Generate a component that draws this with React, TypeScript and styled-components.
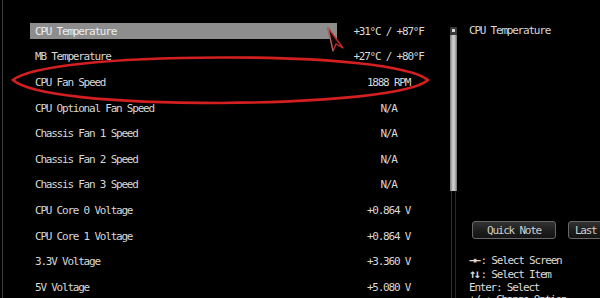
import React from 'react';
import styled, { createGlobalStyle } from 'styled-components';

const GlobalStyle = createGlobalStyle`
  html, body {
    margin: 0;
    padding: 0;
    background: #000;
    overflow: hidden;
  }
`;

const Screen = styled.div`
  position: relative;
  width: 600px;
  height: 298px;
  overflow: hidden;
  background: #000;
  padding-left: 2px;
  box-sizing: border-box;
  display: flex;
  font-family: 'DejaVu Sans Mono', 'Liberation Mono', monospace;
  font-size: 11px;
  letter-spacing: -1.22px;
  color: #d8d8d8;
`;

const Main = styled.div`
  display: flex;
  flex: 1;
  border-left: 1px solid #3c3c3c;
`;

const ItemList = styled.div`
  width: 437px;
  padding: 18px 0 0 27px;
  box-sizing: border-box;
  display: grid;
  grid-auto-rows: 25.6px;
  align-content: start;
`;

const Row = styled.div`
  display: grid;
  grid-template-columns: 307px 1fr;
  align-items: center;
`;

const Label = styled.div<{ $selected?: boolean }>`
  height: 16px;
  line-height: 17px;
  padding-left: 5px;
  white-space: nowrap;
  background: ${p => (p.$selected ? '#8d8d8d' : 'transparent')};
  color: ${p => (p.$selected ? '#eeeeee' : '#d8d8d8')};
`;

const Value = styled.div`
  text-align: center;
  white-space: nowrap;
  line-height: 17px;
  height: 16px;
`;

const ScrollBar = styled.div`
  width: 7px;
  margin-left: 10px;
  display: flex;
  flex-direction: column;
  padding-top: 27px;
`;

const ScrollCap = styled.div`
  height: 8px;
  background: #3a3a3a;
  border-radius: 1px;
  display: flex;
  justify-content: center;
  padding-top: 2px;
  box-sizing: border-box;

  &::after {
    content: '';
    width: 3px;
    height: 3px;
    background: #d8d8d8;
  }
`;

const ScrollThumb = styled.div`
  height: 156px;
  background: linear-gradient(to right, #7a7a7a, #d2d2d2 45%, #bcbcbc 70%, #6e6e6e);
`;

const ScrollTrack = styled.div`
  flex: 1;
  margin: 0 1px;
  border-left: 1px solid #2e2e2e;
  border-right: 1px solid #262626;
`;

const SidePanel = styled.div`
  flex: 1;
  padding: 25px 0 0 12px;
  display: flex;
  flex-direction: column;
  white-space: nowrap;
`;

const SideTitle = styled.div`
  line-height: 12px;
`;

const ButtonRow = styled.div`
  display: flex;
  gap: 12px;
  margin-top: 184px;
  margin-left: 3px;
`;

const NoteButton = styled.div`
  flex: 0 0 84px;
  height: 18px;
  box-sizing: border-box;
  border: 1px solid #686868;
  border-radius: 3px;
  background: linear-gradient(#333 0%, #1c1c1c 60%, #141414 100%);
  color: #cfcfcf;
  line-height: 17px;
  text-align: center;
`;

const HelpText = styled.div`
  margin-top: 15px;
  line-height: 12.8px;
  color: #dcdcdc;
`;

const Arrows = styled.span`
  font-size: 12px;
  font-weight: bold;
  letter-spacing: -2.5px;
  margin-right: 2px;
`;

const Overlay = styled.svg`
  position: absolute;
  left: 0;
  top: 0;
  pointer-events: none;
`;

type Item = { label: string; value: string };

const items: Item[] = [
  { label: 'CPU Temperature', value: '+31°C / +87°F' },
  { label: 'MB Temperature', value: '+27°C / +80°F' },
  { label: 'CPU Fan Speed', value: '1888 RPM' },
  { label: 'CPU Optional Fan Speed', value: 'N/A' },
  { label: 'Chassis Fan 1 Speed', value: 'N/A' },
  { label: 'Chassis Fan 2 Speed', value: 'N/A' },
  { label: 'Chassis Fan 3 Speed', value: 'N/A' },
  { label: 'CPU Core 0 Voltage', value: '+0.864 V' },
  { label: 'CPU Core 1 Voltage', value: '+0.864 V' },
  { label: '3.3V Voltage', value: '+3.360 V' },
  { label: '5V Voltage', value: '+5.080 V' },
];

const help = [
  { keys: '→←', text: ': Select Screen' },
  { keys: '↑↓', text: ': Select Item' },
  { keys: '', text: 'Enter: Select' },
  { keys: '', text: '+/-: Change Option' },
];

const App: React.FC = () => (
  <>
    <GlobalStyle />
    <Screen>
      <Main>
        <ItemList>
          {items.map((item, i) => (
            <Row key={item.label}>
              <Label $selected={i === 0}>{item.label}</Label>
              <Value>{item.value}</Value>
            </Row>
          ))}
        </ItemList>
        <ScrollBar>
          <ScrollCap />
          <ScrollThumb />
          <ScrollTrack />
        </ScrollBar>
        <SidePanel>
          <SideTitle>CPU Temperature</SideTitle>
          <ButtonRow>
            <NoteButton>Quick Note</NoteButton>
            <NoteButton>Last Modified</NoteButton>
          </ButtonRow>
          <HelpText>
            {help.map(line => (
              <div key={line.text}>
                {line.keys && <Arrows>{line.keys}</Arrows>}
                {line.text}
              </div>
            ))}
          </HelpText>
        </SidePanel>
      </Main>

      {/* red hand-drawn marker around the fan speed row */}
      <Overlay width="600" height="298" viewBox="0 0 600 298">
        <path
          d="M13 80 C 30 66, 110 58, 220 57.5 C 330 57, 410 66, 428 80 C 412 94, 330 102, 220 103 C 110 103, 30 95, 13 80 Z"
          fill="none"
          stroke="#d31f1f"
          strokeWidth="2.6"
        />
        {/* mouse pointer */}
        <path
          d="M328 28 L333 51 L336 44 L343 48 Z"
          fill="#120606"
          stroke="#c42a2a"
          strokeWidth="1.4"
          strokeLinejoin="round"
        />
        <path d="M328 28 L333 51" stroke="#8a8a8a" strokeWidth="0.8" fill="none" />
      </Overlay>
    </Screen>
  </>
);

export default App;
